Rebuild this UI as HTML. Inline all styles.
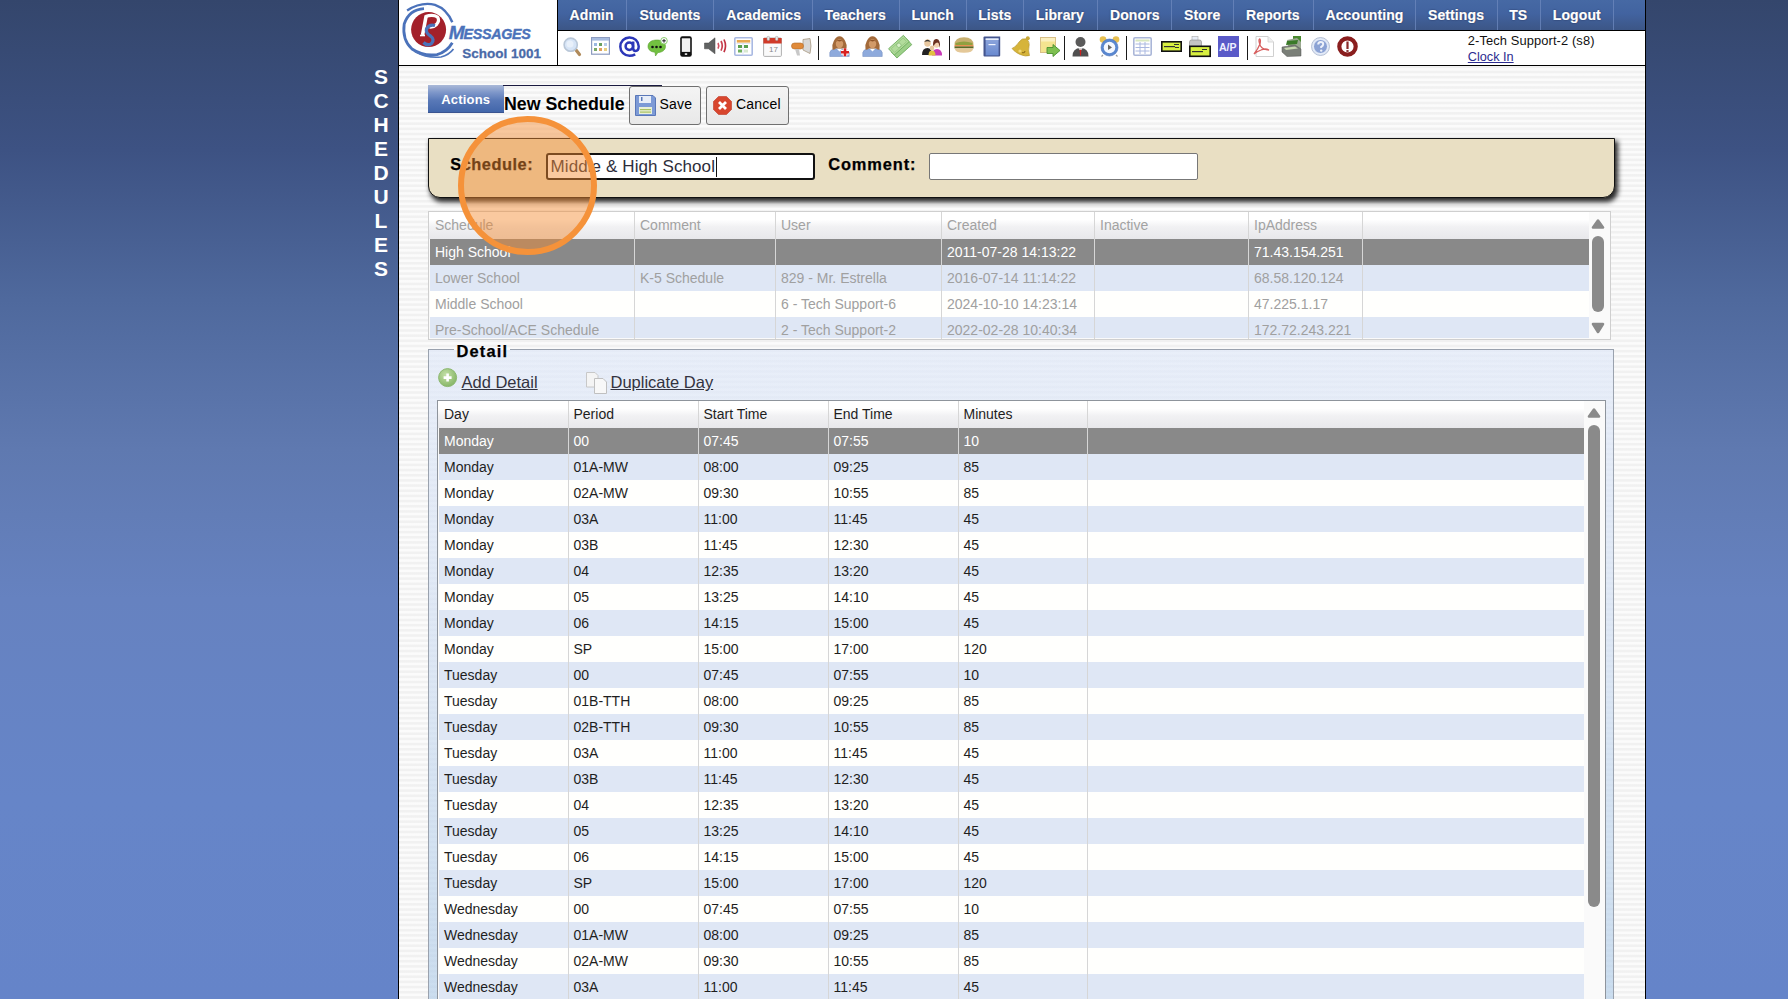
<!DOCTYPE html><html><head><meta charset="utf-8"><style>
html,body{margin:0;padding:0;width:1788px;height:999px;overflow:hidden;}
body{position:relative;background:linear-gradient(to bottom,#34466c 0%,#3d5283 15%,#4f699d 30%,#5f79b0 45%,#6682c0 60%,#6685c8 80%,#6584c9 100%);font-family:"Liberation Sans", sans-serif;}
.t{position:absolute;white-space:nowrap;font-family:"Liberation Sans", sans-serif;}
.r{position:absolute;box-sizing:border-box;}
svg{position:absolute;overflow:visible;}
</style></head><body><div class="t" style="left:370px;width:22px;text-align:center;top:66.22px;font-size:21px;line-height:21px;color:#fff;font-weight:bold">S</div>
<div class="t" style="left:370px;width:22px;text-align:center;top:90.22px;font-size:21px;line-height:21px;color:#fff;font-weight:bold">C</div>
<div class="t" style="left:370px;width:22px;text-align:center;top:114.22px;font-size:21px;line-height:21px;color:#fff;font-weight:bold">H</div>
<div class="t" style="left:370px;width:22px;text-align:center;top:138.22px;font-size:21px;line-height:21px;color:#fff;font-weight:bold">E</div>
<div class="t" style="left:370px;width:22px;text-align:center;top:162.22px;font-size:21px;line-height:21px;color:#fff;font-weight:bold">D</div>
<div class="t" style="left:370px;width:22px;text-align:center;top:186.22px;font-size:21px;line-height:21px;color:#fff;font-weight:bold">U</div>
<div class="t" style="left:370px;width:22px;text-align:center;top:210.22px;font-size:21px;line-height:21px;color:#fff;font-weight:bold">L</div>
<div class="t" style="left:370px;width:22px;text-align:center;top:234.22px;font-size:21px;line-height:21px;color:#fff;font-weight:bold">E</div>
<div class="t" style="left:370px;width:22px;text-align:center;top:258.22px;font-size:21px;line-height:21px;color:#fff;font-weight:bold">S</div>
<div class="r" style="left:398px;top:0px;width:1248px;height:999px;background:#000;"></div>
<div class="r" style="left:399px;top:66px;width:1246px;height:933px;background:repeating-linear-gradient(to bottom,#f1f1f1 0px,#f1f1f1 1.6px,#fbfbfb 2.6px,#fbfbfb 4.2px,#f1f1f1 5.17px);"></div>
<div class="r" style="left:399px;top:0px;width:158px;height:65px;background:#fff;"></div>
<svg style="left:399px;top:0px" width="158" height="65" viewBox="0 0 158 65">
<path d="M8.1,10.5 Q22,1.5 36,4.8 Q48,9 53.3,22.3" fill="none" stroke="#4b72ba" stroke-width="2.4"/>
<path d="M25,8.6 Q10,9.5 5.2,24 Q3,40 13,49 Q24,56.5 38,54.6 Q48,52 53.3,42.8" fill="none" stroke="#4b72ba" stroke-width="2.8"/>
<path d="M16,51.5 Q28,58.5 42,57 Q50,55 54.5,49" fill="none" stroke="#4f76bc" stroke-width="1.7"/>
<circle cx="29.6" cy="29.6" r="17.5" fill="#a3202a"/>
<path d="M26.5,16.5 Q34,14 38.5,17 Q41,20.5 37.5,24.5 Q34.5,27.5 30.5,27" fill="none" stroke="#fff" stroke-width="3.2"/>
<path d="M27.2,15.5 L23.6,35" stroke="#fff" stroke-width="3.6"/>
<path d="M21,35.5 H26" stroke="#fff" stroke-width="1.6"/>
<path d="M36,25.5 Q30,24 27.5,29 Q26.5,33 31.5,36 Q36,39.5 32.5,43.5 Q28.5,46.5 24.5,42.5" fill="none" stroke="#4a72ba" stroke-width="3.3"/>
</svg>
<div class="t" style="left:448.70px;top:23.32px;font-size:19px;line-height:19px;color:#4b72ba;font-weight:bold;font-style:italic;-webkit-text-stroke:0.4px #4b72ba;">M</div>
<div class="t" style="left:463.50px;top:27.30px;font-size:14.3px;line-height:14.3px;color:#4b72ba;font-weight:bold;font-style:italic;letter-spacing:-0.3px;-webkit-text-stroke:0.4px #4b72ba;">ESSAGES</div>
<div class="t" style="left:462.30px;top:46.97px;font-size:13.5px;line-height:13.5px;color:#4a6aa8;font-weight:bold;-webkit-text-stroke:0.3px #4a6aa8;">School 1001</div>
<div class="r" style="left:557px;top:0px;width:1px;height:66px;background:#000;"></div>
<div class="r" style="left:558px;top:0px;width:1087px;height:30px;background:linear-gradient(to bottom,#4669a4 0%,#4263a0 45%,#3c5686 100%);"></div>
<div class="r" style="left:626px;top:0px;width:1px;height:30px;background:#6a86bc;opacity:0.8;"></div>
<div class="r" style="left:713px;top:0px;width:1px;height:30px;background:#6a86bc;opacity:0.8;"></div>
<div class="r" style="left:812px;top:0px;width:1px;height:30px;background:#6a86bc;opacity:0.8;"></div>
<div class="r" style="left:899px;top:0px;width:1px;height:30px;background:#6a86bc;opacity:0.8;"></div>
<div class="r" style="left:966px;top:0px;width:1px;height:30px;background:#6a86bc;opacity:0.8;"></div>
<div class="r" style="left:1023px;top:0px;width:1px;height:30px;background:#6a86bc;opacity:0.8;"></div>
<div class="r" style="left:1097px;top:0px;width:1px;height:30px;background:#6a86bc;opacity:0.8;"></div>
<div class="r" style="left:1171px;top:0px;width:1px;height:30px;background:#6a86bc;opacity:0.8;"></div>
<div class="r" style="left:1233px;top:0px;width:1px;height:30px;background:#6a86bc;opacity:0.8;"></div>
<div class="r" style="left:1313px;top:0px;width:1px;height:30px;background:#6a86bc;opacity:0.8;"></div>
<div class="r" style="left:1415px;top:0px;width:1px;height:30px;background:#6a86bc;opacity:0.8;"></div>
<div class="r" style="left:1497px;top:0px;width:1px;height:30px;background:#6a86bc;opacity:0.8;"></div>
<div class="r" style="left:1540px;top:0px;width:1px;height:30px;background:#6a86bc;opacity:0.8;"></div>
<div class="r" style="left:1613px;top:0px;width:1px;height:30px;background:#6a86bc;opacity:0.8;"></div>
<div class="t" style="left:569.60px;top:7.95px;font-size:14px;line-height:14px;color:#fff;font-weight:bold;letter-spacing:0.1px;-webkit-text-stroke:0.2px #fff;text-shadow:0 0 1.5px rgba(0,0,30,0.7);">Admin</div>
<div class="t" style="left:639.60px;top:7.95px;font-size:14px;line-height:14px;color:#fff;font-weight:bold;letter-spacing:0.1px;-webkit-text-stroke:0.2px #fff;text-shadow:0 0 1.5px rgba(0,0,30,0.7);">Students</div>
<div class="t" style="left:726.20px;top:7.95px;font-size:14px;line-height:14px;color:#fff;font-weight:bold;letter-spacing:0.1px;-webkit-text-stroke:0.2px #fff;text-shadow:0 0 1.5px rgba(0,0,30,0.7);">Academics</div>
<div class="t" style="left:824.60px;top:7.95px;font-size:14px;line-height:14px;color:#fff;font-weight:bold;letter-spacing:0.1px;-webkit-text-stroke:0.2px #fff;text-shadow:0 0 1.5px rgba(0,0,30,0.7);">Teachers</div>
<div class="t" style="left:911.40px;top:7.95px;font-size:14px;line-height:14px;color:#fff;font-weight:bold;letter-spacing:0.1px;-webkit-text-stroke:0.2px #fff;text-shadow:0 0 1.5px rgba(0,0,30,0.7);">Lunch</div>
<div class="t" style="left:978.20px;top:7.95px;font-size:14px;line-height:14px;color:#fff;font-weight:bold;letter-spacing:0.1px;-webkit-text-stroke:0.2px #fff;text-shadow:0 0 1.5px rgba(0,0,30,0.7);">Lists</div>
<div class="t" style="left:1035.80px;top:7.95px;font-size:14px;line-height:14px;color:#fff;font-weight:bold;letter-spacing:0.1px;-webkit-text-stroke:0.2px #fff;text-shadow:0 0 1.5px rgba(0,0,30,0.7);">Library</div>
<div class="t" style="left:1110.00px;top:7.95px;font-size:14px;line-height:14px;color:#fff;font-weight:bold;letter-spacing:0.1px;-webkit-text-stroke:0.2px #fff;text-shadow:0 0 1.5px rgba(0,0,30,0.7);">Donors</div>
<div class="t" style="left:1184.10px;top:7.95px;font-size:14px;line-height:14px;color:#fff;font-weight:bold;letter-spacing:0.1px;-webkit-text-stroke:0.2px #fff;text-shadow:0 0 1.5px rgba(0,0,30,0.7);">Store</div>
<div class="t" style="left:1246.10px;top:7.95px;font-size:14px;line-height:14px;color:#fff;font-weight:bold;letter-spacing:0.1px;-webkit-text-stroke:0.2px #fff;text-shadow:0 0 1.5px rgba(0,0,30,0.7);">Reports</div>
<div class="t" style="left:1325.50px;top:7.95px;font-size:14px;line-height:14px;color:#fff;font-weight:bold;letter-spacing:0.1px;-webkit-text-stroke:0.2px #fff;text-shadow:0 0 1.5px rgba(0,0,30,0.7);">Accounting</div>
<div class="t" style="left:1428.00px;top:7.95px;font-size:14px;line-height:14px;color:#fff;font-weight:bold;letter-spacing:0.1px;-webkit-text-stroke:0.2px #fff;text-shadow:0 0 1.5px rgba(0,0,30,0.7);">Settings</div>
<div class="t" style="left:1509.20px;top:7.95px;font-size:14px;line-height:14px;color:#fff;font-weight:bold;letter-spacing:0.1px;-webkit-text-stroke:0.2px #fff;text-shadow:0 0 1.5px rgba(0,0,30,0.7);">TS</div>
<div class="t" style="left:1552.80px;top:7.95px;font-size:14px;line-height:14px;color:#fff;font-weight:bold;letter-spacing:0.1px;-webkit-text-stroke:0.2px #fff;text-shadow:0 0 1.5px rgba(0,0,30,0.7);">Logout</div>
<div class="r" style="left:558px;top:31px;width:1087px;height:34px;background:#fff;"></div>
<div class="r" style="left:818px;top:36px;width:1px;height:24px;background:#1a1a1a;"></div>
<div class="r" style="left:949px;top:36px;width:1px;height:24px;background:#1a1a1a;"></div>
<div class="r" style="left:1064px;top:36px;width:1px;height:24px;background:#1a1a1a;"></div>
<div class="r" style="left:1126px;top:36px;width:1px;height:24px;background:#1a1a1a;"></div>
<div class="r" style="left:1247px;top:36px;width:1px;height:24px;background:#1a1a1a;"></div>
<div class="t" style="left:1467.80px;top:34.88px;font-size:12.9px;line-height:12.9px;color:#111;font-weight:normal;letter-spacing:0.1px;">2-Tech Support-2 (s8)</div>
<div class="t" style="left:1467.80px;top:50.85px;font-size:12.7px;line-height:12.7px;color:#2b2b8f;font-weight:normal;text-decoration:underline;">Clock In</div>
<svg style="left:562px;top:36px" width="20" height="21" viewBox="0 0 20 21">
<line x1="14" y1="14" x2="17.5" y2="18.5" stroke="#b08a5a" stroke-width="3.2" stroke-linecap="round"/>
<circle cx="8.7" cy="8.7" r="6.6" fill="#d6e4f6" stroke="#b9c7d8" stroke-width="1.6"/>
<circle cx="8" cy="8" r="3.5" fill="#e8f0fa"/></svg>
<svg style="left:591px;top:37px" width="19" height="18" viewBox="0 0 19 18">
<rect x="0.6" y="0.6" width="17.8" height="16.6" fill="#fff" stroke="#8d9cc0" stroke-width="1.2"/>
<rect x="1" y="1" width="17" height="2.6" fill="#a7bce0"/>
<rect x="3" y="6" width="3" height="3" fill="#9ab8e0"/><rect x="8" y="6" width="3" height="3" fill="#6aa060"/><rect x="13" y="6" width="3" height="3" fill="#b8cce8"/>
<rect x="3" y="11" width="3" height="3" fill="#78a868"/><rect x="8" y="11" width="3" height="3" fill="#e0a060"/><rect x="13" y="11" width="3" height="3" fill="#e8d080"/></svg>
<svg style="left:619px;top:36px" width="21" height="21" viewBox="0 0 21 21">
<path d="M16.2,18.3 Q13.6,19.8 10.5,19.8 A9.2,9.2 0 1 1 19.7,10.3 Q19.7,15 16.5,15 Q14.2,15 14.2,12.3 V5.5" fill="none" stroke="#2c37b8" stroke-width="2.5"/>
<circle cx="10.3" cy="10.3" r="3.7" fill="none" stroke="#2c37b8" stroke-width="2.5"/></svg>
<svg style="left:647px;top:37px" width="22" height="20" viewBox="0 0 22 20">
<path d="M1,9.5 C1,5 5,3 10,3 C15,3 18.5,5.5 18.5,9.5 C18.5,13 15,15.5 11,15.5 L8.5,19 L8,15.3 C4,14.8 1,13 1,9.5 Z" fill="#72c040" stroke="#5aa030" stroke-width="0.6"/>
<circle cx="5.5" cy="10" r="1.3" fill="#111"/><circle cx="9.5" cy="10" r="1.3" fill="#111"/><circle cx="13.5" cy="10" r="1.3" fill="#111"/>
<circle cx="17" cy="3.8" r="3.3" fill="#fff" stroke="#8ccd70" stroke-width="1"/>
<path d="M17,2 V5.6 M15.2,3.8 H18.8" stroke="#222" stroke-width="1"/></svg>
<svg style="left:680px;top:36px" width="12" height="21" viewBox="0 0 12 21">
<rect x="0.2" y="0.3" width="11.6" height="20.4" rx="2.2" fill="#111"/>
<rect x="1.8" y="2.3" width="8.4" height="13.6" fill="#f2f2f2"/>
<rect x="4.8" y="17.2" width="2.4" height="1.8" fill="#ddd"/></svg>
<svg style="left:704px;top:37px" width="23" height="18" viewBox="0 0 23 18">
<path d="M0.5,6 H4.5 L11,0.8 V16.8 L4.5,11.8 H0.5 Z" fill="#606262" stroke="#444" stroke-width="0.5"/>
<path d="M14,6 Q15.5,8.8 14,11.6" stroke="#d05060" stroke-width="1.6" fill="none"/>
<path d="M17,4 Q19.5,8.8 17,13.6" stroke="#c84050" stroke-width="1.7" fill="none"/>
<path d="M20,2.5 Q23,8.8 20,15.2" stroke="#c03040" stroke-width="1.7" fill="none"/></svg>
<svg style="left:734px;top:37px" width="19" height="19" viewBox="0 0 19 19">
<rect x="0.8" y="0.8" width="17.4" height="17.4" rx="1" fill="#fff" stroke="#a9b9e2" stroke-width="1.6"/>
<rect x="2.8" y="3" width="13.4" height="2.6" fill="#e8a850"/>
<rect x="4" y="8" width="4" height="3" fill="#58a050"/><rect x="10" y="8" width="4" height="3" fill="#58a050"/>
<rect x="4" y="12.5" width="4" height="3" fill="#70b060"/><rect x="10" y="12.5" width="4" height="3" fill="#d8e8d0"/>
<path d="M2.5,6.5 H16.5 M9,6 V17" stroke="#c8d4e8" stroke-width="0.6"/></svg>
<svg style="left:763px;top:36px" width="19" height="21" viewBox="0 0 19 21">
<rect x="0.6" y="2" width="17.8" height="18.4" rx="1" fill="#fafafa" stroke="#b0b0b0" stroke-width="1"/>
<rect x="0.4" y="2" width="18.2" height="5.5" fill="#d03a28"/>
<rect x="4" y="0.4" width="2.6" height="4" rx="1" fill="#e8e8e8" stroke="#999" stroke-width="0.5"/>
<rect x="12.4" y="0.4" width="2.6" height="4" rx="1" fill="#e8e8e8" stroke="#999" stroke-width="0.5"/>
<text x="6" y="16" font-family="Liberation Sans" font-size="8" fill="#888">17</text></svg>
<svg style="left:791px;top:38px" width="21" height="19" viewBox="0 0 21 19">
<path d="M12,1.5 L19,0.5 Q21,8 19,15.5 L12,12 Z" fill="#d8d8d8" stroke="#a89880" stroke-width="0.8"/>
<rect x="0.5" y="5" width="12" height="6" rx="3" fill="#e08a3a" stroke="#b06a2a" stroke-width="0.6"/>
<path d="M4,11 L6,17.5 H9 L8,11 Z" fill="#c8c8c8"/></svg>
<svg style="left:828.5px;top:36px" width="21" height="21" viewBox="0 0 21 21">
<path d="M0.8,20.5 V16.5 Q1.5,13.2 6,13 H15 Q19.5,13.2 20.2,16.5 V20.5 Z" fill="#8eaadc" stroke="#7b93c4" stroke-width="0.6"/>
<path d="M8,13 L10.5,15.5 L13,13 Z" fill="#fff"/>
<path d="M3.5,13.5 Q2.5,9 4.8,5 Q7,0.3 10.5,0.3 Q14,0.3 16.2,5 Q18.5,9 17.5,13.5 Q15.5,14 14,12.5 L7,12.5 Q5.5,14 3.5,13.5 Z" fill="#a36a3a"/>
<ellipse cx="10.5" cy="7.8" rx="3.7" ry="4.6" fill="#d29a68"/>
<path d="M6.5,5.5 Q10.5,1.8 14.5,5.5 Q12,4.5 10.5,5.5 Q9,4.5 6.5,5.5 Z" fill="#8e5428"/><path d="M16,12.2 V20.2 M12,16.2 H20" stroke="#fff" stroke-width="4.4"/><path d="M16,12.2 V20.2 M12,16.2 H20" stroke="#d82020" stroke-width="2.6"/></svg>
<svg style="left:861.5px;top:36px" width="21" height="21" viewBox="0 0 21 21">
<path d="M0.8,20.5 V16.5 Q1.5,13.2 6,13 H15 Q19.5,13.2 20.2,16.5 V20.5 Z" fill="#8eaadc" stroke="#7b93c4" stroke-width="0.6"/>
<path d="M8,13 L10.5,15.5 L13,13 Z" fill="#fff"/>
<path d="M3.5,13.5 Q2.5,9 4.8,5 Q7,0.3 10.5,0.3 Q14,0.3 16.2,5 Q18.5,9 17.5,13.5 Q15.5,14 14,12.5 L7,12.5 Q5.5,14 3.5,13.5 Z" fill="#a36a3a"/>
<ellipse cx="10.5" cy="7.8" rx="3.7" ry="4.6" fill="#d29a68"/>
<path d="M6.5,5.5 Q10.5,1.8 14.5,5.5 Q12,4.5 10.5,5.5 Q9,4.5 6.5,5.5 Z" fill="#8e5428"/></svg>
<svg style="left:890px;top:36px" width="20" height="21" viewBox="0 0 20 21">
<g transform="rotate(-42 10 10.5)">
<rect x="0" y="9" width="20" height="8" fill="#9ccf88" stroke="#6aaa5a" stroke-width="0.8"/>
<rect x="0" y="4.5" width="20" height="8.5" fill="#b2dc9c" stroke="#6aaa5a" stroke-width="0.8"/>
<rect x="2" y="6.3" width="16" height="5" fill="none" stroke="#8cc078" stroke-width="0.6"/>
<circle cx="10" cy="8.8" r="2.2" fill="#d8f0c8" stroke="#78b068" stroke-width="0.6"/></g></svg>
<svg style="left:922px;top:37px" width="20" height="19" viewBox="0 0 20 19">
<path d="M0,18 Q0,11 5.5,11 Q10,11 10,18 Z" fill="#222"/>
<ellipse cx="5.5" cy="6" rx="3.3" ry="3.8" fill="#e8c8a0"/><path d="M2.2,5 Q5.5,0.5 8.8,5 Q5.5,3.5 2.2,5 Z" fill="#333"/>
<path d="M10,18.5 Q10,12 15,12 Q20,12 20,18.5 Z" fill="#c83ab8"/>
<ellipse cx="14.5" cy="7" rx="3.2" ry="3.8" fill="#f0d0b0"/><path d="M11,8 Q11,1.5 14.5,2 Q18.5,2 18,11 L16.5,6 Q14,4 11.5,9 Z" fill="#6a3020"/>
<path d="M6.5,18.5 Q6.5,13.5 10,13.5 Q13.5,13.5 13.5,18.5 Z" fill="#e0c040"/>
<ellipse cx="10" cy="11" rx="2.3" ry="2.5" fill="#e8c8a0"/></svg>
<svg style="left:954px;top:37px" width="20" height="16" viewBox="0 0 20 16">
<path d="M0.5,8 Q0.5,0.3 10,0.3 Q19.5,0.3 19.5,8 Z" fill="#c8b070"/>
<path d="M1.5,6 Q10,3 18.5,6 V8.5 H1.5 Z" fill="#90a040"/>
<rect x="0.5" y="8" width="19" height="1.6" fill="#e89050"/>
<rect x="0.5" y="9.4" width="19" height="2" fill="#5a6a28"/>
<path d="M0.8,11.2 H19.2 Q19.2,15.7 10,15.7 Q0.8,15.7 0.8,11.2 Z" fill="#e4c898"/></svg>
<svg style="left:983px;top:36px" width="18" height="21" viewBox="0 0 18 21">
<defs><linearGradient id="bk" x1="0" y1="0" x2="0" y2="1"><stop offset="0" stop-color="#8ea6dc"/><stop offset="1" stop-color="#6a8ad0"/></linearGradient></defs>
<path d="M1.5,0.5 H17.2 V19.5 Q17.2,20.5 16,20.5 H1.5 Q0.5,20.5 0.5,19.5 V1.5 Q0.5,0.5 1.5,0.5 Z" fill="#44558e"/>
<rect x="2.6" y="2.4" width="13" height="17" fill="url(#bk)"/>
<rect x="2.6" y="2.4" width="13" height="1.6" fill="#e8eefa"/>
<rect x="5.5" y="8" width="7" height="1.2" fill="#f0f4ff"/></svg>
<svg style="left:1011px;top:36px" width="20" height="21" viewBox="0 0 20 21">
<path d="M1,12.5 Q5,11 8,6 Q11,1.5 15.5,3 Q19,5.5 18,10.5 Q17,14.5 18.5,19.5 Q15,21 9,18.5 Q4,16.5 1,12.5 Z" fill="#d6b43a" stroke="#b0902a" stroke-width="0.6"/>
<circle cx="16.8" cy="2.2" r="2" fill="#c8a838"/>
<circle cx="9" cy="15" r="1.6" fill="#f0d878"/>
<path d="M11,16.5 Q13.5,17.5 14,15" stroke="#8a6a18" stroke-width="1.1" fill="none"/></svg>
<svg style="left:1040px;top:37px" width="21" height="21" viewBox="0 0 21 21">
<rect x="0.5" y="0.5" width="15" height="15" fill="#f4e490" stroke="#d8c088" stroke-width="1"/>
<rect x="1" y="1" width="14" height="3.5" fill="#fbf0c0"/>
<path d="M7,10.5 H13 V7.5 L20,13.5 L13,19.5 V16.5 H7 Z" fill="#7ec050" stroke="#4a9030" stroke-width="0.9"/></svg>
<svg style="left:1072px;top:36px" width="17" height="21" viewBox="0 0 17 21">
<path d="M0.5,20.5 Q0.5,12 8.5,12 Q16.5,12 16.5,20.5 Z" fill="#505050"/>
<path d="M6.5,12.3 L8.5,15 L10.5,12.3 Z" fill="#fff"/>
<path d="M7.7,14 L8.5,13.5 L9.3,14 L9,19 L8.5,20 L8,19 Z" fill="#d02020"/>
<circle cx="8.5" cy="6" r="5" fill="#5a5a5a"/></svg>
<svg style="left:1099px;top:36px" width="21" height="21" viewBox="0 0 21 21">
<circle cx="4" cy="3.5" r="3.3" fill="#e8c050"/><circle cx="17" cy="3.5" r="3.3" fill="#e8c050"/>
<circle cx="10.5" cy="11.5" r="8.5" fill="#5a88d0" stroke="#4a70b8" stroke-width="0.6"/>
<circle cx="10.5" cy="11.5" r="5.8" fill="#f4f8ff"/>
<path d="M9,8.5 L13,11.5 L9,14 Z" fill="#666"/>
<path d="M4,19 L2.5,20.5 M17,19 L18.5,20.5" stroke="#999" stroke-width="1.2"/></svg>
<svg style="left:1133px;top:37px" width="19" height="19" viewBox="0 0 19 19">
<rect x="0.8" y="0.8" width="17.4" height="17.4" rx="1.2" fill="#fff" stroke="#aab6d8" stroke-width="1.6"/>
<rect x="2.5" y="2.5" width="14" height="2" fill="#d8e8c0"/>
<path d="M2.5,7 H16.5 M2.5,10.5 H16.5 M2.5,14 H16.5 M7,5 V17 M12,5 V17" stroke="#aab8e0" stroke-width="1"/></svg>
<svg style="left:1161px;top:41px" width="21" height="11" viewBox="0 0 21 11">
<rect x="0.8" y="0.8" width="19.4" height="9.4" fill="#d8f040" stroke="#111" stroke-width="1.6"/>
<rect x="3" y="5" width="11" height="1.2" fill="#333"/><rect x="13" y="3" width="5" height="1" fill="#333"/><rect x="14" y="6" width="4" height="1" fill="#333"/></svg>
<svg style="left:1189px;top:36px" width="22" height="21" viewBox="0 0 22 21">
<rect x="3" y="0.5" width="6" height="5" fill="#e8eef8" stroke="#aaa" stroke-width="0.6"/>
<rect x="0.5" y="4" width="12" height="8" rx="2" fill="#c4c4c4" stroke="#888" stroke-width="0.6"/>
<rect x="0.8" y="10.3" width="20.4" height="10" fill="#d8f040" stroke="#111" stroke-width="1.6"/>
<rect x="3" y="15" width="11" height="1.2" fill="#333"/><rect x="13" y="13" width="5" height="1" fill="#333"/></svg>
<svg style="left:1218px;top:36px" width="21" height="21" viewBox="0 0 21 21">
<rect x="0" y="0" width="21" height="21" fill="#5a5ac8"/>
<text x="1" y="15" font-family="Liberation Sans" font-weight="bold" font-size="10.5" fill="#f0f0ff">A/P</text></svg>
<svg style="left:1253px;top:36px" width="21" height="21" viewBox="0 0 21 21">
<path d="M3,0.5 H15 L20.5,6 V20.5 H3 Z" fill="#fff" stroke="#d0d0d0" stroke-width="1"/>
<path d="M15,0.5 V6 H20.5" fill="#f0f0f0" stroke="#d0d0d0" stroke-width="0.8"/>
<path d="M1,18 Q5,13 7,8 Q8,3 6.5,3 Q5,4 7.5,10 Q10,14 16,14 Q12,12 8,14 Q4,15.5 1,18 Z" fill="none" stroke="#d86060" stroke-width="1.3"/></svg>
<svg style="left:1281px;top:36px" width="21" height="21" viewBox="0 0 21 21">
<rect x="12" y="0" width="8" height="6" fill="#4a8a30"/>
<path d="M6,4 L16,2 L20,6 L20,14 L8,16 Z" fill="#9aa890"/>
<path d="M6,5 L17,4 L16,8 L5,9 Z" fill="#3a7a28"/>
<path d="M1,11 L14,9 L20,13 L20,20 L6,20.5 L1,16 Z" fill="#7a7f78" stroke="#555" stroke-width="0.5"/>
<path d="M3,12 L14,10.5 L17,12.5 L5,14 Z" fill="#c8d8b0"/></svg>
<svg style="left:1311px;top:37px" width="19" height="19" viewBox="0 0 19 19">
<circle cx="9.5" cy="9.5" r="9" fill="#dfe8f6" stroke="#a8b4cc" stroke-width="0.8"/>
<circle cx="9.5" cy="9.5" r="7" fill="#8ba2d4" stroke="#f0f4fc" stroke-width="0.9"/>
<path d="M7.2,7.5 Q7.2,5 9.7,5 Q12.2,5 12.2,7.3 Q12.2,8.8 10.2,9.8 V11" stroke="#eef2fa" stroke-width="2" fill="none"/>
<circle cx="10.2" cy="13.6" r="1.2" fill="#eef2fa"/></svg>
<svg style="left:1337px;top:36px" width="21" height="21" viewBox="0 0 21 21">
<circle cx="10.5" cy="10.5" r="8.2" fill="#fff" stroke="#8a1e1e" stroke-width="4.2"/>
<rect x="9.4" y="5.5" width="2.2" height="7.5" fill="#8a2a2a"/>
<rect x="9.4" y="14" width="2.2" height="2" fill="#8a3a3a"/></svg>
<div class="r" style="left:428px;top:85px;width:76px;height:28px;background:linear-gradient(to bottom,#aab9d8 0%,#7d96c9 28%,#5878b7 58%,#4266aa 100%);border-bottom:1px solid #3a5490;"></div>
<div class="t" style="left:441.20px;top:93.00px;font-size:13px;line-height:13px;color:#fff;font-weight:bold;letter-spacing:0.2px;">Actions</div>
<div class="r" style="left:503px;top:85px;width:159px;height:1px;background:#1a1a40;"></div>
<div class="t" style="left:504.00px;top:95.93px;font-size:17.8px;line-height:17.8px;color:#000;font-weight:bold;">New Schedule</div>
<div class="r" style="left:629px;top:86px;width:72px;height:39px;background:linear-gradient(to bottom,#f4f4f4,#e8e8e8);border:1px solid #707070;border-radius:3px;"></div>
<svg style="left:635px;top:95px" width="21" height="21" viewBox="0 0 21 21">
<path d="M0.5,0.5 H18 L20.5,3 V20.5 H0.5 Z" fill="#7c9ad6" stroke="#5a78b8" stroke-width="1"/>
<rect x="4" y="1" width="12" height="7" fill="#e8eef8"/><rect x="6" y="2" width="1.5" height="4" fill="#5a78b8"/>
<rect x="4" y="12" width="13" height="7" fill="#e8f0d8"/><rect x="5" y="14" width="11" height="1.2" fill="#a8c060"/><rect x="5" y="16.5" width="11" height="1.2" fill="#a8c060"/>
</svg>
<div class="t" style="left:659.50px;top:96.75px;font-size:14px;line-height:14px;color:#000;font-weight:normal;letter-spacing:0.2px;">Save</div>
<div class="r" style="left:706px;top:86px;width:83px;height:39px;background:linear-gradient(to bottom,#f4f4f4,#e8e8e8);border:1px solid #707070;border-radius:3px;"></div>
<svg style="left:713px;top:96px" width="19" height="19" viewBox="0 0 19 19">
<path d="M5.5,0.5 H13.5 L18.5,5.5 V13.5 L13.5,18.5 H5.5 L0.5,13.5 V5.5 Z" fill="#d8462e" stroke="#c03a28" stroke-width="0.6"/>
<path d="M6,6 L13,13 M13,6 L6,13" stroke="#fff" stroke-width="2.8"/>
</svg>
<div class="t" style="left:736.00px;top:96.75px;font-size:14px;line-height:14px;color:#000;font-weight:normal;letter-spacing:0.2px;">Cancel</div>
<div class="r" style="left:428px;top:138px;width:1187px;height:59.5px;background:#e9dfc3;border:1.5px solid #111;border-radius:0 0 12px 12px;box-shadow:2.5px 3.5px 5px rgba(0,0,0,0.85);"></div>
<div class="t" style="left:450.30px;top:156.02px;font-size:16.4px;line-height:16.4px;color:#000;font-weight:bold;letter-spacing:0.5px;-webkit-text-stroke:0.25px #000;">Schedule:</div>
<div class="r" style="left:546px;top:153px;width:269px;height:27px;background:#fff;border:2px solid #111;border-radius:3px;"></div>
<div class="t" style="left:550.50px;top:158.21px;font-size:17px;line-height:17px;color:#2d2d3a;font-weight:normal;letter-spacing:0.1px;">Middle &amp; High School</div>
<div class="r" style="left:716px;top:157px;width:1px;height:20px;background:#111;"></div>
<div class="t" style="left:828.20px;top:156.02px;font-size:16.4px;line-height:16.4px;color:#000;font-weight:bold;letter-spacing:0.9px;-webkit-text-stroke:0.25px #000;">Comment:</div>
<div class="r" style="left:929px;top:153px;width:269px;height:27px;background:#fff;border:1px solid #777;border-radius:2px;"></div>
<div class="r" style="left:428px;top:211px;width:1183px;height:129px;background:#fafafa;border:1px solid #cfcfcf;"></div>
<div class="r" style="left:429px;top:212px;width:1160px;height:27px;background:linear-gradient(to bottom,#ffffff 0%,#ffffff 28%,#f1f1f3 55%,#e8e8eb 100%);"></div>
<div class="r" style="left:430px;top:239px;width:1159px;height:26px;background:#898989;"></div>
<div class="r" style="left:430px;top:265px;width:1159px;height:26px;background:#dfe7f5;"></div>
<div class="r" style="left:430px;top:291px;width:1159px;height:26px;background:#fffffd;"></div>
<div class="r" style="left:430px;top:317px;width:1159px;height:21px;background:#dfe7f5;"></div>
<div class="r" style="left:634px;top:212px;width:1px;height:127px;background:#d6d6d6;"></div>
<div class="r" style="left:775px;top:212px;width:1px;height:127px;background:#d6d6d6;"></div>
<div class="r" style="left:941px;top:212px;width:1px;height:127px;background:#d6d6d6;"></div>
<div class="r" style="left:1094px;top:212px;width:1px;height:127px;background:#d6d6d6;"></div>
<div class="r" style="left:1248px;top:212px;width:1px;height:127px;background:#d6d6d6;"></div>
<div class="r" style="left:1362px;top:212px;width:1px;height:127px;background:#d6d6d6;"></div>
<div class="t" style="left:435.00px;top:217.85px;font-size:14px;line-height:14px;color:#a2a2a2;font-weight:normal;">Schedule</div>
<div class="t" style="left:640.00px;top:217.85px;font-size:14px;line-height:14px;color:#a2a2a2;font-weight:normal;">Comment</div>
<div class="t" style="left:781.00px;top:217.85px;font-size:14px;line-height:14px;color:#a2a2a2;font-weight:normal;">User</div>
<div class="t" style="left:947.00px;top:217.85px;font-size:14px;line-height:14px;color:#a2a2a2;font-weight:normal;">Created</div>
<div class="t" style="left:1100.00px;top:217.85px;font-size:14px;line-height:14px;color:#a2a2a2;font-weight:normal;">Inactive</div>
<div class="t" style="left:1254.00px;top:217.85px;font-size:14px;line-height:14px;color:#a2a2a2;font-weight:normal;">IpAddress</div>
<div class="t" style="left:435.00px;top:245.15px;font-size:14px;line-height:14px;color:#fff;font-weight:normal;">High School</div>
<div class="t" style="left:947.00px;top:245.15px;font-size:14px;line-height:14px;color:#fff;font-weight:normal;">2011-07-28 14:13:22</div>
<div class="t" style="left:1254.00px;top:245.15px;font-size:14px;line-height:14px;color:#fff;font-weight:normal;">71.43.154.251</div>
<div class="t" style="left:435.00px;top:271.15px;font-size:14px;line-height:14px;color:#a0a0a0;font-weight:normal;">Lower School</div>
<div class="t" style="left:640.00px;top:271.15px;font-size:14px;line-height:14px;color:#a0a0a0;font-weight:normal;">K-5 Schedule</div>
<div class="t" style="left:781.00px;top:271.15px;font-size:14px;line-height:14px;color:#a0a0a0;font-weight:normal;">829 - Mr. Estrella</div>
<div class="t" style="left:947.00px;top:271.15px;font-size:14px;line-height:14px;color:#a0a0a0;font-weight:normal;">2016-07-14 11:14:22</div>
<div class="t" style="left:1254.00px;top:271.15px;font-size:14px;line-height:14px;color:#a0a0a0;font-weight:normal;">68.58.120.124</div>
<div class="t" style="left:435.00px;top:297.15px;font-size:14px;line-height:14px;color:#a0a0a0;font-weight:normal;">Middle School</div>
<div class="t" style="left:781.00px;top:297.15px;font-size:14px;line-height:14px;color:#a0a0a0;font-weight:normal;">6 - Tech Support-6</div>
<div class="t" style="left:947.00px;top:297.15px;font-size:14px;line-height:14px;color:#a0a0a0;font-weight:normal;">2024-10-10 14:23:14</div>
<div class="t" style="left:1254.00px;top:297.15px;font-size:14px;line-height:14px;color:#a0a0a0;font-weight:normal;">47.225.1.17</div>
<div class="t" style="left:435.00px;top:323.15px;font-size:14px;line-height:14px;color:#a0a0a0;font-weight:normal;">Pre-School/ACE Schedule</div>
<div class="t" style="left:781.00px;top:323.15px;font-size:14px;line-height:14px;color:#a0a0a0;font-weight:normal;">2 - Tech Support-2</div>
<div class="t" style="left:947.00px;top:323.15px;font-size:14px;line-height:14px;color:#a0a0a0;font-weight:normal;">2022-02-28 10:40:34</div>
<div class="t" style="left:1254.00px;top:323.15px;font-size:14px;line-height:14px;color:#a0a0a0;font-weight:normal;">172.72.243.221</div>
<svg style="left:1589px;top:212px" width="21" height="127" viewBox="0 0 21 127">
<path d="M4,15.5 L9,8.5 L14,15.5 Z" fill="#8a8a8a" stroke="#8a8a8a" stroke-width="2.6" stroke-linejoin="round"/>
<rect x="3" y="24" width="12" height="76" rx="6" fill="#8a8a8a"/>
<path d="M4,112 L9,120 L14,112 Z" fill="#8a8a8a" stroke="#8a8a8a" stroke-width="2.6" stroke-linejoin="round"/>
</svg>
<div class="r" style="left:428px;top:349px;width:1186px;height:661px;background:repeating-linear-gradient(to bottom,rgba(0,0,40,0.012) 0px,rgba(0,0,40,0.012) 1.6px,rgba(255,255,255,0.03) 2.6px,rgba(255,255,255,0.03) 4.2px,rgba(0,0,40,0.012) 5.17px),linear-gradient(to bottom,#e8eef9 0%,#dfe8f5 40%,#c9dcee 100%);border:1px solid #9aa2ae;"></div>
<div class="r" style="left:454px;top:340px;width:56px;height:10px;background:repeating-linear-gradient(to bottom,#f1f1f1 0px,#f1f1f1 1.6px,#fbfbfb 2.6px,#fbfbfb 4.2px,#f1f1f1 5.17px);"></div>
<div class="t" style="left:456.50px;top:343.02px;font-size:16.4px;line-height:16.4px;color:#000;font-weight:bold;letter-spacing:1.2px;-webkit-text-stroke:0.25px #000;">Detail</div>
<svg style="left:438px;top:368px" width="20" height="20" viewBox="0 0 20 20">
<defs><radialGradient id="gA" cx="0.4" cy="0.35" r="0.7"><stop offset="0" stop-color="#c4e0a8"/><stop offset="1" stop-color="#84b464"/></radialGradient></defs>
<circle cx="9.6" cy="9.6" r="9" fill="url(#gA)" stroke="#8cb870" stroke-width="1"/>
<path d="M9.6,5.6 V13.6 M5.6,9.6 H13.6" stroke="#fff" stroke-width="2.6"/>
</svg>
<div class="t" style="left:461.50px;top:374.33px;font-size:16.5px;line-height:16.5px;color:#333340;font-weight:normal;text-decoration:underline;">Add Detail</div>
<svg style="left:586px;top:372px" width="22" height="22" viewBox="0 0 22 22">
<path d="M0.5,0.5 H9 L12,3.5 V15 H0.5 Z" fill="#f4f4f4" stroke="#c8c8c8" stroke-width="1"/>
<path d="M8.5,6.5 H17 L20.5,10 V21.5 H8.5 Z" fill="#f8f8f8" stroke="#c0c0c0" stroke-width="1"/>
</svg>
<div class="t" style="left:610.50px;top:374.33px;font-size:16.5px;line-height:16.5px;color:#333340;font-weight:normal;text-decoration:underline;">Duplicate Day</div>
<div class="r" style="left:437px;top:400px;width:1169px;height:610px;background:#fafafa;border:1px solid #8e949c;"></div>
<div class="r" style="left:438px;top:401px;width:1146px;height:27px;background:linear-gradient(to bottom,#ffffff 0%,#ffffff 28%,#f1f1f3 55%,#e8e8eb 100%);"></div>
<div class="r" style="left:439px;top:428px;width:1145px;height:26px;background:#898989;"></div>
<div class="r" style="left:439px;top:454px;width:1145px;height:26px;background:#dfe7f5;"></div>
<div class="r" style="left:439px;top:480px;width:1145px;height:26px;background:#fffffd;"></div>
<div class="r" style="left:439px;top:506px;width:1145px;height:26px;background:#dfe7f5;"></div>
<div class="r" style="left:439px;top:532px;width:1145px;height:26px;background:#fffffd;"></div>
<div class="r" style="left:439px;top:558px;width:1145px;height:26px;background:#dfe7f5;"></div>
<div class="r" style="left:439px;top:584px;width:1145px;height:26px;background:#fffffd;"></div>
<div class="r" style="left:439px;top:610px;width:1145px;height:26px;background:#dfe7f5;"></div>
<div class="r" style="left:439px;top:636px;width:1145px;height:26px;background:#fffffd;"></div>
<div class="r" style="left:439px;top:662px;width:1145px;height:26px;background:#dfe7f5;"></div>
<div class="r" style="left:439px;top:688px;width:1145px;height:26px;background:#fffffd;"></div>
<div class="r" style="left:439px;top:714px;width:1145px;height:26px;background:#dfe7f5;"></div>
<div class="r" style="left:439px;top:740px;width:1145px;height:26px;background:#fffffd;"></div>
<div class="r" style="left:439px;top:766px;width:1145px;height:26px;background:#dfe7f5;"></div>
<div class="r" style="left:439px;top:792px;width:1145px;height:26px;background:#fffffd;"></div>
<div class="r" style="left:439px;top:818px;width:1145px;height:26px;background:#dfe7f5;"></div>
<div class="r" style="left:439px;top:844px;width:1145px;height:26px;background:#fffffd;"></div>
<div class="r" style="left:439px;top:870px;width:1145px;height:26px;background:#dfe7f5;"></div>
<div class="r" style="left:439px;top:896px;width:1145px;height:26px;background:#fffffd;"></div>
<div class="r" style="left:439px;top:922px;width:1145px;height:26px;background:#dfe7f5;"></div>
<div class="r" style="left:439px;top:948px;width:1145px;height:26px;background:#fffffd;"></div>
<div class="r" style="left:439px;top:974px;width:1145px;height:26px;background:#dfe7f5;"></div>
<div class="r" style="left:567.5px;top:401px;width:1.0px;height:598px;background:#d6d6d6;"></div>
<div class="r" style="left:697.5px;top:401px;width:1.0px;height:598px;background:#d6d6d6;"></div>
<div class="r" style="left:827.5px;top:401px;width:1.0px;height:598px;background:#d6d6d6;"></div>
<div class="r" style="left:957.5px;top:401px;width:1.0px;height:598px;background:#d6d6d6;"></div>
<div class="r" style="left:1087px;top:401px;width:1px;height:598px;background:#d6d6d6;"></div>
<div class="t" style="left:444.00px;top:406.95px;font-size:14px;line-height:14px;color:#1e1e1e;font-weight:normal;">Day</div>
<div class="t" style="left:573.50px;top:406.95px;font-size:14px;line-height:14px;color:#1e1e1e;font-weight:normal;">Period</div>
<div class="t" style="left:703.50px;top:406.95px;font-size:14px;line-height:14px;color:#1e1e1e;font-weight:normal;">Start Time</div>
<div class="t" style="left:833.50px;top:406.95px;font-size:14px;line-height:14px;color:#1e1e1e;font-weight:normal;">End Time</div>
<div class="t" style="left:963.50px;top:406.95px;font-size:14px;line-height:14px;color:#1e1e1e;font-weight:normal;">Minutes</div>
<div class="t" style="left:444.00px;top:433.65px;font-size:14px;line-height:14px;color:#fff;font-weight:normal;">Monday</div>
<div class="t" style="left:573.50px;top:433.65px;font-size:14px;line-height:14px;color:#fff;font-weight:normal;">00</div>
<div class="t" style="left:703.50px;top:433.65px;font-size:14px;line-height:14px;color:#fff;font-weight:normal;">07:45</div>
<div class="t" style="left:833.50px;top:433.65px;font-size:14px;line-height:14px;color:#fff;font-weight:normal;">07:55</div>
<div class="t" style="left:963.50px;top:433.65px;font-size:14px;line-height:14px;color:#fff;font-weight:normal;">10</div>
<div class="t" style="left:444.00px;top:459.65px;font-size:14px;line-height:14px;color:#1e1e1e;font-weight:normal;">Monday</div>
<div class="t" style="left:573.50px;top:459.65px;font-size:14px;line-height:14px;color:#1e1e1e;font-weight:normal;">01A-MW</div>
<div class="t" style="left:703.50px;top:459.65px;font-size:14px;line-height:14px;color:#1e1e1e;font-weight:normal;">08:00</div>
<div class="t" style="left:833.50px;top:459.65px;font-size:14px;line-height:14px;color:#1e1e1e;font-weight:normal;">09:25</div>
<div class="t" style="left:963.50px;top:459.65px;font-size:14px;line-height:14px;color:#1e1e1e;font-weight:normal;">85</div>
<div class="t" style="left:444.00px;top:485.65px;font-size:14px;line-height:14px;color:#1e1e1e;font-weight:normal;">Monday</div>
<div class="t" style="left:573.50px;top:485.65px;font-size:14px;line-height:14px;color:#1e1e1e;font-weight:normal;">02A-MW</div>
<div class="t" style="left:703.50px;top:485.65px;font-size:14px;line-height:14px;color:#1e1e1e;font-weight:normal;">09:30</div>
<div class="t" style="left:833.50px;top:485.65px;font-size:14px;line-height:14px;color:#1e1e1e;font-weight:normal;">10:55</div>
<div class="t" style="left:963.50px;top:485.65px;font-size:14px;line-height:14px;color:#1e1e1e;font-weight:normal;">85</div>
<div class="t" style="left:444.00px;top:511.65px;font-size:14px;line-height:14px;color:#1e1e1e;font-weight:normal;">Monday</div>
<div class="t" style="left:573.50px;top:511.65px;font-size:14px;line-height:14px;color:#1e1e1e;font-weight:normal;">03A</div>
<div class="t" style="left:703.50px;top:511.65px;font-size:14px;line-height:14px;color:#1e1e1e;font-weight:normal;">11:00</div>
<div class="t" style="left:833.50px;top:511.65px;font-size:14px;line-height:14px;color:#1e1e1e;font-weight:normal;">11:45</div>
<div class="t" style="left:963.50px;top:511.65px;font-size:14px;line-height:14px;color:#1e1e1e;font-weight:normal;">45</div>
<div class="t" style="left:444.00px;top:537.65px;font-size:14px;line-height:14px;color:#1e1e1e;font-weight:normal;">Monday</div>
<div class="t" style="left:573.50px;top:537.65px;font-size:14px;line-height:14px;color:#1e1e1e;font-weight:normal;">03B</div>
<div class="t" style="left:703.50px;top:537.65px;font-size:14px;line-height:14px;color:#1e1e1e;font-weight:normal;">11:45</div>
<div class="t" style="left:833.50px;top:537.65px;font-size:14px;line-height:14px;color:#1e1e1e;font-weight:normal;">12:30</div>
<div class="t" style="left:963.50px;top:537.65px;font-size:14px;line-height:14px;color:#1e1e1e;font-weight:normal;">45</div>
<div class="t" style="left:444.00px;top:563.65px;font-size:14px;line-height:14px;color:#1e1e1e;font-weight:normal;">Monday</div>
<div class="t" style="left:573.50px;top:563.65px;font-size:14px;line-height:14px;color:#1e1e1e;font-weight:normal;">04</div>
<div class="t" style="left:703.50px;top:563.65px;font-size:14px;line-height:14px;color:#1e1e1e;font-weight:normal;">12:35</div>
<div class="t" style="left:833.50px;top:563.65px;font-size:14px;line-height:14px;color:#1e1e1e;font-weight:normal;">13:20</div>
<div class="t" style="left:963.50px;top:563.65px;font-size:14px;line-height:14px;color:#1e1e1e;font-weight:normal;">45</div>
<div class="t" style="left:444.00px;top:589.65px;font-size:14px;line-height:14px;color:#1e1e1e;font-weight:normal;">Monday</div>
<div class="t" style="left:573.50px;top:589.65px;font-size:14px;line-height:14px;color:#1e1e1e;font-weight:normal;">05</div>
<div class="t" style="left:703.50px;top:589.65px;font-size:14px;line-height:14px;color:#1e1e1e;font-weight:normal;">13:25</div>
<div class="t" style="left:833.50px;top:589.65px;font-size:14px;line-height:14px;color:#1e1e1e;font-weight:normal;">14:10</div>
<div class="t" style="left:963.50px;top:589.65px;font-size:14px;line-height:14px;color:#1e1e1e;font-weight:normal;">45</div>
<div class="t" style="left:444.00px;top:615.65px;font-size:14px;line-height:14px;color:#1e1e1e;font-weight:normal;">Monday</div>
<div class="t" style="left:573.50px;top:615.65px;font-size:14px;line-height:14px;color:#1e1e1e;font-weight:normal;">06</div>
<div class="t" style="left:703.50px;top:615.65px;font-size:14px;line-height:14px;color:#1e1e1e;font-weight:normal;">14:15</div>
<div class="t" style="left:833.50px;top:615.65px;font-size:14px;line-height:14px;color:#1e1e1e;font-weight:normal;">15:00</div>
<div class="t" style="left:963.50px;top:615.65px;font-size:14px;line-height:14px;color:#1e1e1e;font-weight:normal;">45</div>
<div class="t" style="left:444.00px;top:641.65px;font-size:14px;line-height:14px;color:#1e1e1e;font-weight:normal;">Monday</div>
<div class="t" style="left:573.50px;top:641.65px;font-size:14px;line-height:14px;color:#1e1e1e;font-weight:normal;">SP</div>
<div class="t" style="left:703.50px;top:641.65px;font-size:14px;line-height:14px;color:#1e1e1e;font-weight:normal;">15:00</div>
<div class="t" style="left:833.50px;top:641.65px;font-size:14px;line-height:14px;color:#1e1e1e;font-weight:normal;">17:00</div>
<div class="t" style="left:963.50px;top:641.65px;font-size:14px;line-height:14px;color:#1e1e1e;font-weight:normal;">120</div>
<div class="t" style="left:444.00px;top:667.65px;font-size:14px;line-height:14px;color:#1e1e1e;font-weight:normal;">Tuesday</div>
<div class="t" style="left:573.50px;top:667.65px;font-size:14px;line-height:14px;color:#1e1e1e;font-weight:normal;">00</div>
<div class="t" style="left:703.50px;top:667.65px;font-size:14px;line-height:14px;color:#1e1e1e;font-weight:normal;">07:45</div>
<div class="t" style="left:833.50px;top:667.65px;font-size:14px;line-height:14px;color:#1e1e1e;font-weight:normal;">07:55</div>
<div class="t" style="left:963.50px;top:667.65px;font-size:14px;line-height:14px;color:#1e1e1e;font-weight:normal;">10</div>
<div class="t" style="left:444.00px;top:693.65px;font-size:14px;line-height:14px;color:#1e1e1e;font-weight:normal;">Tuesday</div>
<div class="t" style="left:573.50px;top:693.65px;font-size:14px;line-height:14px;color:#1e1e1e;font-weight:normal;">01B-TTH</div>
<div class="t" style="left:703.50px;top:693.65px;font-size:14px;line-height:14px;color:#1e1e1e;font-weight:normal;">08:00</div>
<div class="t" style="left:833.50px;top:693.65px;font-size:14px;line-height:14px;color:#1e1e1e;font-weight:normal;">09:25</div>
<div class="t" style="left:963.50px;top:693.65px;font-size:14px;line-height:14px;color:#1e1e1e;font-weight:normal;">85</div>
<div class="t" style="left:444.00px;top:719.65px;font-size:14px;line-height:14px;color:#1e1e1e;font-weight:normal;">Tuesday</div>
<div class="t" style="left:573.50px;top:719.65px;font-size:14px;line-height:14px;color:#1e1e1e;font-weight:normal;">02B-TTH</div>
<div class="t" style="left:703.50px;top:719.65px;font-size:14px;line-height:14px;color:#1e1e1e;font-weight:normal;">09:30</div>
<div class="t" style="left:833.50px;top:719.65px;font-size:14px;line-height:14px;color:#1e1e1e;font-weight:normal;">10:55</div>
<div class="t" style="left:963.50px;top:719.65px;font-size:14px;line-height:14px;color:#1e1e1e;font-weight:normal;">85</div>
<div class="t" style="left:444.00px;top:745.65px;font-size:14px;line-height:14px;color:#1e1e1e;font-weight:normal;">Tuesday</div>
<div class="t" style="left:573.50px;top:745.65px;font-size:14px;line-height:14px;color:#1e1e1e;font-weight:normal;">03A</div>
<div class="t" style="left:703.50px;top:745.65px;font-size:14px;line-height:14px;color:#1e1e1e;font-weight:normal;">11:00</div>
<div class="t" style="left:833.50px;top:745.65px;font-size:14px;line-height:14px;color:#1e1e1e;font-weight:normal;">11:45</div>
<div class="t" style="left:963.50px;top:745.65px;font-size:14px;line-height:14px;color:#1e1e1e;font-weight:normal;">45</div>
<div class="t" style="left:444.00px;top:771.65px;font-size:14px;line-height:14px;color:#1e1e1e;font-weight:normal;">Tuesday</div>
<div class="t" style="left:573.50px;top:771.65px;font-size:14px;line-height:14px;color:#1e1e1e;font-weight:normal;">03B</div>
<div class="t" style="left:703.50px;top:771.65px;font-size:14px;line-height:14px;color:#1e1e1e;font-weight:normal;">11:45</div>
<div class="t" style="left:833.50px;top:771.65px;font-size:14px;line-height:14px;color:#1e1e1e;font-weight:normal;">12:30</div>
<div class="t" style="left:963.50px;top:771.65px;font-size:14px;line-height:14px;color:#1e1e1e;font-weight:normal;">45</div>
<div class="t" style="left:444.00px;top:797.65px;font-size:14px;line-height:14px;color:#1e1e1e;font-weight:normal;">Tuesday</div>
<div class="t" style="left:573.50px;top:797.65px;font-size:14px;line-height:14px;color:#1e1e1e;font-weight:normal;">04</div>
<div class="t" style="left:703.50px;top:797.65px;font-size:14px;line-height:14px;color:#1e1e1e;font-weight:normal;">12:35</div>
<div class="t" style="left:833.50px;top:797.65px;font-size:14px;line-height:14px;color:#1e1e1e;font-weight:normal;">13:20</div>
<div class="t" style="left:963.50px;top:797.65px;font-size:14px;line-height:14px;color:#1e1e1e;font-weight:normal;">45</div>
<div class="t" style="left:444.00px;top:823.65px;font-size:14px;line-height:14px;color:#1e1e1e;font-weight:normal;">Tuesday</div>
<div class="t" style="left:573.50px;top:823.65px;font-size:14px;line-height:14px;color:#1e1e1e;font-weight:normal;">05</div>
<div class="t" style="left:703.50px;top:823.65px;font-size:14px;line-height:14px;color:#1e1e1e;font-weight:normal;">13:25</div>
<div class="t" style="left:833.50px;top:823.65px;font-size:14px;line-height:14px;color:#1e1e1e;font-weight:normal;">14:10</div>
<div class="t" style="left:963.50px;top:823.65px;font-size:14px;line-height:14px;color:#1e1e1e;font-weight:normal;">45</div>
<div class="t" style="left:444.00px;top:849.65px;font-size:14px;line-height:14px;color:#1e1e1e;font-weight:normal;">Tuesday</div>
<div class="t" style="left:573.50px;top:849.65px;font-size:14px;line-height:14px;color:#1e1e1e;font-weight:normal;">06</div>
<div class="t" style="left:703.50px;top:849.65px;font-size:14px;line-height:14px;color:#1e1e1e;font-weight:normal;">14:15</div>
<div class="t" style="left:833.50px;top:849.65px;font-size:14px;line-height:14px;color:#1e1e1e;font-weight:normal;">15:00</div>
<div class="t" style="left:963.50px;top:849.65px;font-size:14px;line-height:14px;color:#1e1e1e;font-weight:normal;">45</div>
<div class="t" style="left:444.00px;top:875.65px;font-size:14px;line-height:14px;color:#1e1e1e;font-weight:normal;">Tuesday</div>
<div class="t" style="left:573.50px;top:875.65px;font-size:14px;line-height:14px;color:#1e1e1e;font-weight:normal;">SP</div>
<div class="t" style="left:703.50px;top:875.65px;font-size:14px;line-height:14px;color:#1e1e1e;font-weight:normal;">15:00</div>
<div class="t" style="left:833.50px;top:875.65px;font-size:14px;line-height:14px;color:#1e1e1e;font-weight:normal;">17:00</div>
<div class="t" style="left:963.50px;top:875.65px;font-size:14px;line-height:14px;color:#1e1e1e;font-weight:normal;">120</div>
<div class="t" style="left:444.00px;top:901.65px;font-size:14px;line-height:14px;color:#1e1e1e;font-weight:normal;">Wednesday</div>
<div class="t" style="left:573.50px;top:901.65px;font-size:14px;line-height:14px;color:#1e1e1e;font-weight:normal;">00</div>
<div class="t" style="left:703.50px;top:901.65px;font-size:14px;line-height:14px;color:#1e1e1e;font-weight:normal;">07:45</div>
<div class="t" style="left:833.50px;top:901.65px;font-size:14px;line-height:14px;color:#1e1e1e;font-weight:normal;">07:55</div>
<div class="t" style="left:963.50px;top:901.65px;font-size:14px;line-height:14px;color:#1e1e1e;font-weight:normal;">10</div>
<div class="t" style="left:444.00px;top:927.65px;font-size:14px;line-height:14px;color:#1e1e1e;font-weight:normal;">Wednesday</div>
<div class="t" style="left:573.50px;top:927.65px;font-size:14px;line-height:14px;color:#1e1e1e;font-weight:normal;">01A-MW</div>
<div class="t" style="left:703.50px;top:927.65px;font-size:14px;line-height:14px;color:#1e1e1e;font-weight:normal;">08:00</div>
<div class="t" style="left:833.50px;top:927.65px;font-size:14px;line-height:14px;color:#1e1e1e;font-weight:normal;">09:25</div>
<div class="t" style="left:963.50px;top:927.65px;font-size:14px;line-height:14px;color:#1e1e1e;font-weight:normal;">85</div>
<div class="t" style="left:444.00px;top:953.65px;font-size:14px;line-height:14px;color:#1e1e1e;font-weight:normal;">Wednesday</div>
<div class="t" style="left:573.50px;top:953.65px;font-size:14px;line-height:14px;color:#1e1e1e;font-weight:normal;">02A-MW</div>
<div class="t" style="left:703.50px;top:953.65px;font-size:14px;line-height:14px;color:#1e1e1e;font-weight:normal;">09:30</div>
<div class="t" style="left:833.50px;top:953.65px;font-size:14px;line-height:14px;color:#1e1e1e;font-weight:normal;">10:55</div>
<div class="t" style="left:963.50px;top:953.65px;font-size:14px;line-height:14px;color:#1e1e1e;font-weight:normal;">85</div>
<div class="t" style="left:444.00px;top:979.65px;font-size:14px;line-height:14px;color:#1e1e1e;font-weight:normal;">Wednesday</div>
<div class="t" style="left:573.50px;top:979.65px;font-size:14px;line-height:14px;color:#1e1e1e;font-weight:normal;">03A</div>
<div class="t" style="left:703.50px;top:979.65px;font-size:14px;line-height:14px;color:#1e1e1e;font-weight:normal;">11:00</div>
<div class="t" style="left:833.50px;top:979.65px;font-size:14px;line-height:14px;color:#1e1e1e;font-weight:normal;">11:45</div>
<div class="t" style="left:963.50px;top:979.65px;font-size:14px;line-height:14px;color:#1e1e1e;font-weight:normal;">45</div>
<svg style="left:1584px;top:401px" width="21" height="600" viewBox="0 0 21 600">
<path d="M5,15.5 L10,8.5 L15,15.5 Z" fill="#8a8a8a" stroke="#8a8a8a" stroke-width="2.6" stroke-linejoin="round"/>
<rect x="4" y="24" width="12" height="482" rx="6" fill="#8a8a8a"/>
</svg>
<div class="r" style="left:458px;top:116px;width:139px;height:139px;border-radius:50%;border:6.8px solid #f5923a;background:rgba(245,140,50,0.47);"></div></body></html>
